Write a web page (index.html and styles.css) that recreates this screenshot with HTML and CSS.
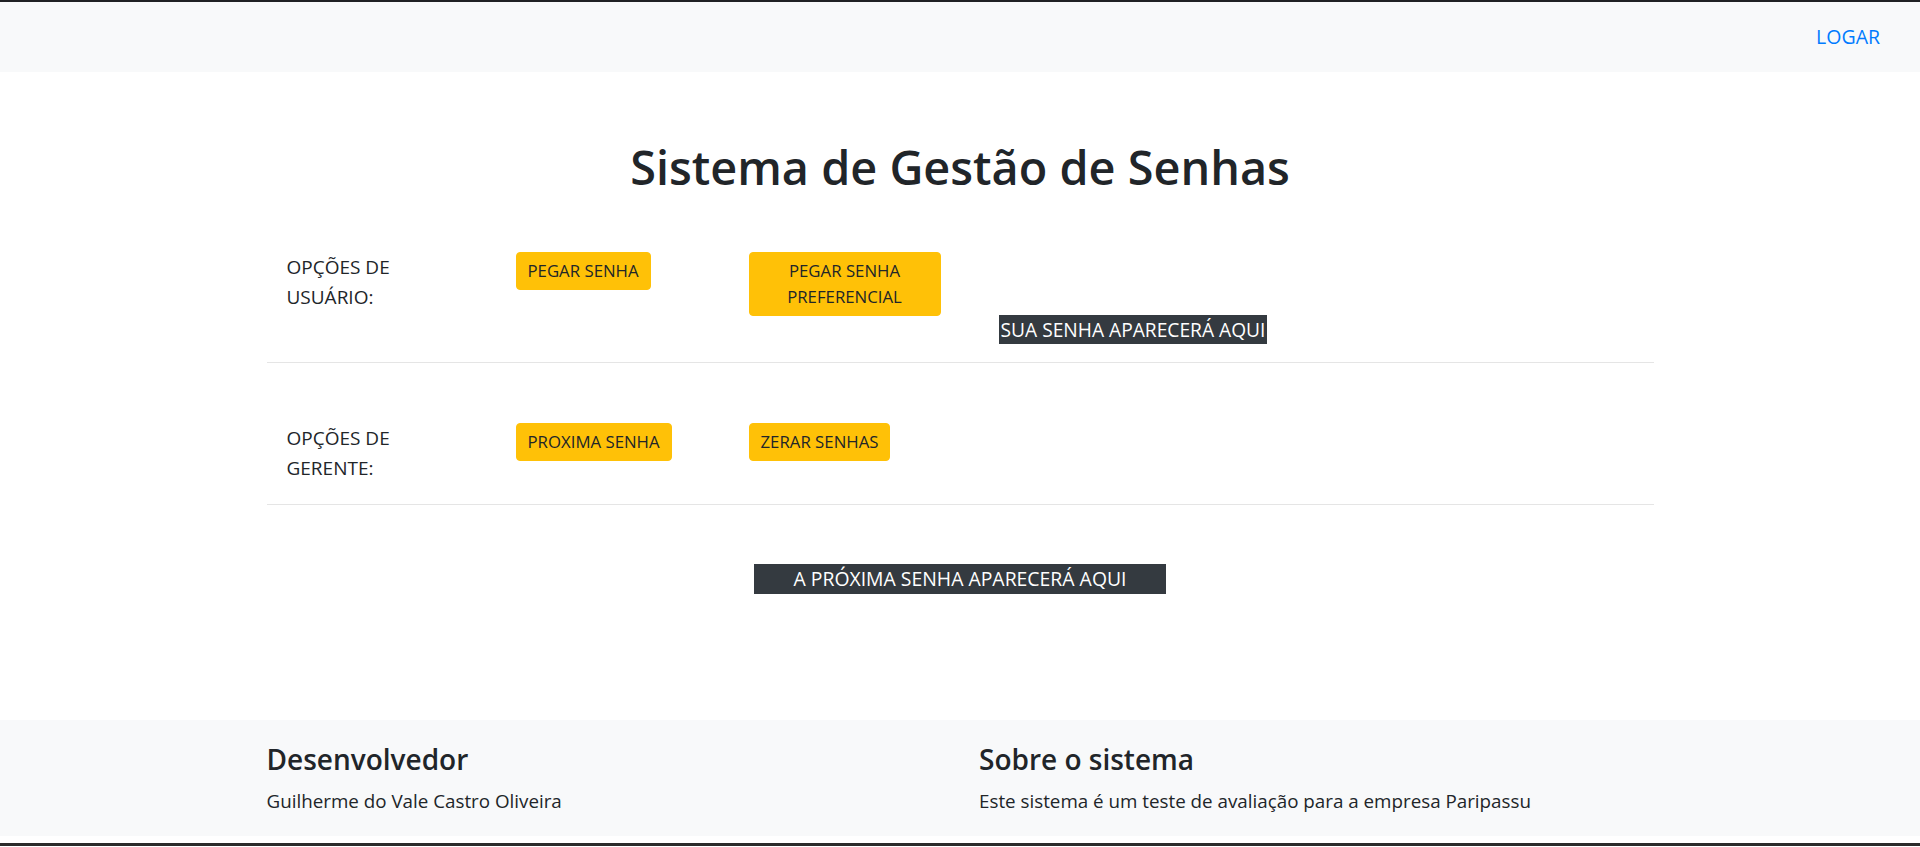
FILE: index.html
```html
<!DOCTYPE html>
<html lang="pt-BR">
<head>
<meta charset="utf-8">
<title>Sistema de Gestão de Senhas</title>
<link rel="stylesheet" href="styles.css">
</head>
<body>
<nav class="navbar">
  <a class="nav-link" href="#">LOGAR</a>
</nav>
<main class="container">
  <h1 class="title">Sistema de Gestão de Senhas</h1>
  <section class="options-row">
    <p class="opt-label">OPÇÕES DE USUÁRIO:</p>
    <div class="opt-cell"><button class="btn">PEGAR SENHA</button></div>
    <div class="opt-cell"><button class="btn btn-wide">PEGAR SENHA PREFERENCIAL</button></div>
    <div class="ticket-cell"><span class="ticket">SUA SENHA APARECERÁ AQUI</span></div>
  </section>
  <hr class="divider divider-user">
  <section class="options-row">
    <p class="opt-label">OPÇÕES DE GERENTE:</p>
    <div class="opt-cell"><button class="btn">PROXIMA SENHA</button></div>
    <div class="opt-cell"><button class="btn">ZERAR SENHAS</button></div>
  </section>
  <hr class="divider divider-manager">
  <div class="next-wrap"><span class="ticket ticket-next">A PRÓXIMA SENHA APARECERÁ AQUI</span></div>
</main>
<footer class="footer">
  <div class="container footer-grid">
    <div class="footer-col">
      <h4 class="footer-title">Desenvolvedor</h4>
      <p class="footer-text">Guilherme do Vale Castro Oliveira</p>
    </div>
    <div class="footer-col">
      <h4 class="footer-title">Sobre o sistema</h4>
      <p class="footer-text">Este sistema é um teste de avaliação para a empresa Paripassu</p>
    </div>
  </div>
</footer>
<div class="bottom-bar"></div>
</body>
</html>
```
FILE: styles.css
```css
* { box-sizing: border-box; }
html, body { height: 100%; }
body {
  margin: 0;
  border-top: 2px solid #202124;
  font-family: "Open Sans", "Noto Sans", sans-serif;
  color: #212529;
  background: #fff;
  overflow: hidden;
}
.navbar {
  height: 70px;
  background: #f8f9fa;
  display: flex;
  justify-content: flex-end;
  align-items: center;
  padding-right: 40px;
}
.nav-link {
  font-size: 19.5px;
  line-height: 30px;
  color: #007bff;
  text-decoration: none;
}
.container {
  width: 1387px;
  margin: 0 auto;
}
.title {
  margin: 65px 0 0;
  font-size: 46.8px;
  line-height: 60px;
  font-weight: 600;
  text-align: center;
}
.options-row {
  display: grid;
  grid-template-columns: 229px 233px 250px auto;
  align-items: start;
  padding-left: 20px;
  margin-top: 55px;
}
.opt-label {
  margin: 0;
  font-size: 19px;
  line-height: 30px;
  max-width: 140px;
}
.btn {
  font-family: inherit;
  font-size: 16.8px;
  line-height: 26px;
  padding: 5px 11px;
  color: #212529;
  background: #ffc107;
  border: 1px solid #ffc107;
  border-radius: 4px;
  cursor: pointer;
}
.btn-wide { width: 192px; }
.ticket-cell { padding-top: 63px; }
.ticket {
  display: inline-block;
  background: #343a40;
  color: #fff;
  font-size: 19.2px;
  line-height: 29px;
  padding: 0 2px;
  white-space: nowrap;
}
.divider {
  border: 0;
  border-top: 1px solid #e5e5e5;
  margin: 0;
}
.divider-user { margin-top: 18px; }
.divider-user + .options-row { margin-top: 60px; }
.divider-manager { margin-top: 21px; }
.next-wrap {
  text-align: center;
  margin-top: 59px;
  margin-bottom: 126px;
}
.ticket-next { padding: 0 39px; line-height: 30px; font-size: 19.4px; }
.footer {
  background: #f8f9fa;
  padding: 21px 0 20px;
}
.footer-grid {
  display: grid;
  grid-template-columns: 1fr 1fr;
  column-gap: 38px;
}
.footer-title {
  margin: 0 0 9px;
  font-size: 28px;
  line-height: 36px;
  font-weight: 600;
}
.footer-text {
  margin: 0;
  font-size: 18.8px;
  line-height: 30px;
}
.bottom-bar {
  margin-top: 7px;
  height: 3px;
  background: #2b2b2b;
}
```
